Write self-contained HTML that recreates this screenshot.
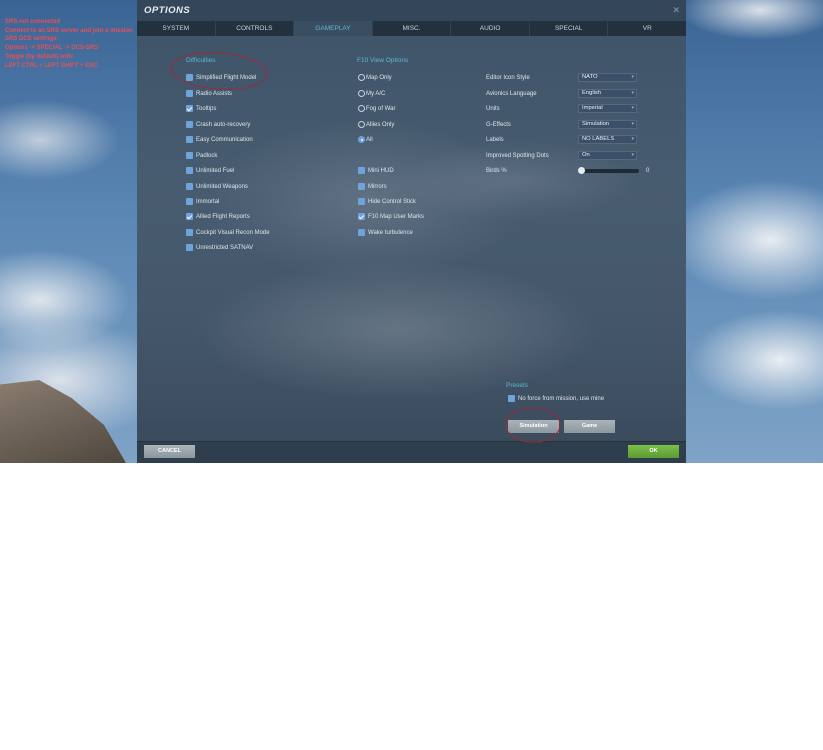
<!DOCTYPE html>
<html><head><meta charset="utf-8"><style>
*{margin:0;padding:0;box-sizing:border-box}
body{width:823px;height:750px;background:#fff;font-family:"Liberation Sans",sans-serif;position:relative;overflow:hidden}
#scene{position:absolute;left:0;top:0;width:823px;height:463px;overflow:hidden;
background:
radial-gradient(ellipse 90px 50px at 40px 300px,rgba(235,238,242,.9),rgba(235,238,242,0)),
radial-gradient(ellipse 110px 60px at 60px 380px,rgba(230,233,238,.9),rgba(230,233,238,0)),
radial-gradient(ellipse 80px 40px at 40px 140px,rgba(220,226,234,.8),rgba(220,226,234,0)),
radial-gradient(ellipse 100px 60px at 770px 240px,rgba(240,242,245,.95),rgba(240,242,245,0)),
radial-gradient(ellipse 90px 50px at 780px 360px,rgba(240,242,245,.95),rgba(240,242,245,0)),
radial-gradient(ellipse 80px 30px at 760px 10px,rgba(235,238,242,.9),rgba(235,238,242,0)),
linear-gradient(180deg,#3a6494 0%,#5a86b4 45%,#7ea3c6 100%)}
.rock{position:absolute;left:0;top:380px;width:130px;height:90px;background:linear-gradient(160deg,#8a7d70,#4b433b);clip-path:polygon(0 5%,30% 0,55% 20%,80% 50%,100% 100%,0 100%)}
.srs{position:absolute;left:5px;top:18px;color:#e8505a;font-size:6px;font-weight:bold;line-height:8.7px}
#panel{position:absolute;left:137px;top:0;width:549px;height:463px;
background:
radial-gradient(ellipse 200px 70px at 260px 330px,rgba(150,160,170,.4),rgba(150,160,170,0)),
radial-gradient(ellipse 160px 80px at 230px 200px,rgba(140,152,165,.35),rgba(140,152,165,0)),
radial-gradient(ellipse 120px 40px at 380px 180px,rgba(140,152,165,.3),rgba(140,152,165,0)),
linear-gradient(180deg,#3d5368 0%,#485c70 40%,#44576a 70%,#38495a 100%)}
.hdr{position:absolute;left:0;top:0;width:549px;height:21px;background:#34465a}
.hdr b{position:absolute;left:7px;top:5px;color:#e8eef4;font-size:9.5px;font-style:italic;letter-spacing:.5px}
.hdr i{position:absolute;right:6px;top:5px;color:#8b9aaa;font-size:9px;font-style:normal}
.tabs{position:absolute;left:0;top:21px;width:549px;height:15px;background:#23313f;display:flex}
.tabs div{flex:1;color:#c9d3dc;font-size:6.5px;text-align:center;line-height:15px;border-right:1px solid #33424f}
.tabs .a{background:#3a4e62;color:#5fb7d8}
.t{position:absolute;color:#dfe6ec;font-size:6px;line-height:8px;white-space:nowrap;margin-top:1px}
.h{position:absolute;color:#5fb7d8;font-size:6.5px;line-height:8px}
.cb{position:absolute;width:7px;height:7px;background:#6ea3dc;border-radius:1px}
.cb.c::after{content:"";position:absolute;left:2px;top:0.5px;width:2px;height:4px;border:solid #fff;border-width:0 1.2px 1.2px 0;transform:rotate(45deg)}
.rd{position:absolute;width:7px;height:7px;border:1px solid #c8d2dc;border-radius:50%}
.rd.c{background:#6ea3dc;border-color:#6ea3dc}
.rd.c::after{content:"";position:absolute;left:1.5px;top:1.5px;width:2px;height:2px;border-radius:50%;background:#fff}
.dd{position:absolute;left:441px;width:59px;height:9px;background:#3b5068;border:1px solid #55697e;color:#e8eef4;font-size:5.8px;padding-left:3px;line-height:7px}
.dd::after{content:"▾";position:absolute;right:2px;top:0;font-size:5px;color:#aab}
.btn{position:absolute;height:13px;background:linear-gradient(#a9b3ba,#8d979e);color:#fff;font-size:5.5px;font-weight:bold;text-align:center;line-height:13px}
.ft{position:absolute;left:0;top:441px;width:549px;height:22px;background:#2e3e4d;border-top:1px solid #253340}
svg{position:absolute;left:0;top:0}
</style></head><body>
<div id="scene"><div class="rock"></div>
<div class="srs">SRS not connected<br>Connect to an SRS server and join a mission<br>SRS DCS settings:<br>Options -&gt; SPECIAL -&gt; DCS-SRS<br>Toggle (by default) with:<br>LEFT CTRL + LEFT SHIFT + ESC</div>
</div>
<div id="panel">
<div class="hdr"><b>OPTIONS</b><i>✕</i></div>
<div class="tabs"><div>SYSTEM</div><div>CONTROLS</div><div class="a">GAMEPLAY</div><div>MISC.</div><div>AUDIO</div><div>SPECIAL</div><div style="border:0">VR</div></div>

<div class="h" style="left:49px;top:57px">Difficulties</div>
<div class="cb" style="left:49px;top:74px"></div><div class="t" style="left:59px;top:73px">Simplified Flight Model</div>
<div class="cb" style="left:49px;top:90px"></div><div class="t" style="left:59px;top:89px">Radio Assists</div>
<div class="cb c" style="left:49px;top:105px"></div><div class="t" style="left:59px;top:104px">Tooltips</div>
<div class="cb" style="left:49px;top:121px"></div><div class="t" style="left:59px;top:120px">Crash auto-recovery</div>
<div class="cb" style="left:49px;top:136px"></div><div class="t" style="left:59px;top:135px">Easy Communication</div>
<div class="cb" style="left:49px;top:152px"></div><div class="t" style="left:59px;top:151px">Padlock</div>
<div class="cb" style="left:49px;top:167px"></div><div class="t" style="left:59px;top:166px">Unlimited Fuel</div>
<div class="cb" style="left:49px;top:183px"></div><div class="t" style="left:59px;top:182px">Unlimited Weapons</div>
<div class="cb" style="left:49px;top:198px"></div><div class="t" style="left:59px;top:197px">Immortal</div>
<div class="cb c" style="left:49px;top:213px"></div><div class="t" style="left:59px;top:212px">Allied Flight Reports</div>
<div class="cb" style="left:49px;top:229px"></div><div class="t" style="left:59px;top:228px">Cockpit Visual Recon Mode</div>
<div class="cb" style="left:49px;top:244px"></div><div class="t" style="left:59px;top:243px">Unrestricted SATNAV</div>

<div class="h" style="left:220px;top:57px">F10 View Options</div>
<div class="rd" style="left:221px;top:74px"></div><div class="t" style="left:229px;top:73px">Map Only</div>
<div class="rd" style="left:221px;top:90px"></div><div class="t" style="left:229px;top:89px">My A/C</div>
<div class="rd" style="left:221px;top:105px"></div><div class="t" style="left:229px;top:104px">Fog of War</div>
<div class="rd" style="left:221px;top:121px"></div><div class="t" style="left:229px;top:120px">Allies Only</div>
<div class="rd c" style="left:221px;top:136px"></div><div class="t" style="left:229px;top:135px">All</div>
<div class="cb" style="left:221px;top:167px"></div><div class="t" style="left:231px;top:166px">Mini HUD</div>
<div class="cb" style="left:221px;top:183px"></div><div class="t" style="left:231px;top:182px">Mirrors</div>
<div class="cb" style="left:221px;top:198px"></div><div class="t" style="left:231px;top:197px">Hide Control Stick</div>
<div class="cb c" style="left:221px;top:213px"></div><div class="t" style="left:231px;top:212px">F10 Map User Marks</div>
<div class="cb" style="left:221px;top:229px"></div><div class="t" style="left:231px;top:228px">Wake turbulence</div>

<div class="t" style="left:349px;top:73px">Editor Icon Style</div><div class="dd" style="top:73px">NATO</div>
<div class="t" style="left:349px;top:89px">Avionics Language</div><div class="dd" style="top:89px">English</div>
<div class="t" style="left:349px;top:104px">Units</div><div class="dd" style="top:104px">Imperial</div>
<div class="t" style="left:349px;top:120px">G-Effects</div><div class="dd" style="top:120px">Simulation</div>
<div class="t" style="left:349px;top:135px">Labels</div><div class="dd" style="top:135px">NO LABELS</div>
<div class="t" style="left:349px;top:151px">Improved Spotting Dots</div><div class="dd" style="top:151px">On</div>
<div class="t" style="left:349px;top:166px">Birds %</div>
<div style="position:absolute;left:443px;top:169px;width:59px;height:4px;background:#1e2a36;border-radius:2px"></div>
<div style="position:absolute;left:441px;top:167px;width:7px;height:7px;background:#e8ecef;border-radius:50%"></div>
<div class="t" style="left:509px;top:166px">0</div>

<div class="h" style="left:369px;top:382px">Presets</div>
<div class="cb" style="left:371px;top:395px"></div><div class="t" style="left:381px;top:394px">No force from mission, use mine</div>
<div class="btn" style="left:371px;top:420px;width:51px">Simulation</div>
<div class="btn" style="left:427px;top:420px;width:51px">Game</div>

<div class="ft"></div>
<div class="btn" style="left:7px;top:445px;width:51px">CANCEL</div>
<div class="btn" style="left:491px;top:445px;width:51px;background:linear-gradient(#7cbf4a,#5b9a33)">OK</div>

<svg width="549" height="463"><g fill="none" stroke="#a0283a" stroke-width="1">
<ellipse cx="82" cy="71" rx="48" ry="18" transform="rotate(4 82 71)"/>
<ellipse cx="396" cy="425" rx="27" ry="17"/></g></svg>
</div>
</body></html>
